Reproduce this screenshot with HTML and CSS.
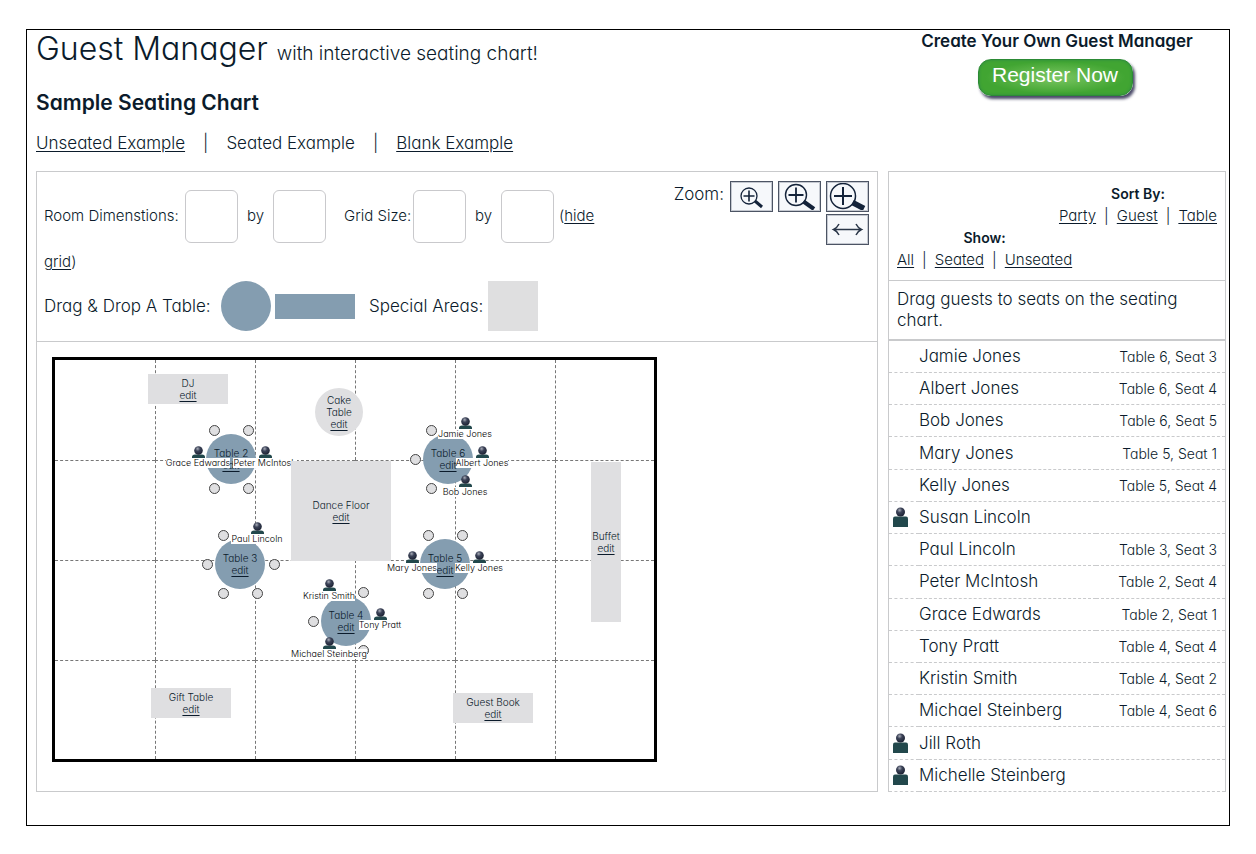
FILE: index.html
```html
<!DOCTYPE html>
<html lang="en">
<head>
  <meta charset="utf-8">
  <meta name="viewport" content="width=device-width, initial-scale=1">
  <title>Guest Manager</title>
  <link rel="stylesheet" href="styles.css">
</head>

<body>

<!-- shared icons -->
<svg class="sprite" width="0" height="0" aria-hidden="true">
  <defs>
    <radialGradient id="head" cx="0.4" cy="0.3" r="0.7">
      <stop offset="0" stop-color="#a9adb8"/>
      <stop offset="0.4" stop-color="#3b4257"/>
      <stop offset="1" stop-color="#1c2233"/>
    </radialGradient>
  </defs>
  <symbol id="person" viewBox="0 0 15 20">
    <path d="M0 20V11.500Q0 9.500 2 9.500H13Q15 9.500 15 11.500V20Z" fill="#22484c"/>
    <circle cx="7.500" cy="5" r="4.500" fill="url(#head)"/>
  </symbol>
  <symbol id="bust" viewBox="0 0 13 12">
    <path d="M0 12V11Q0 8.500 3 8.500H10Q13 8.500 13 11V12Z" fill="#22484c"/>
    <circle cx="6.500" cy="4.500" r="4.300" fill="url(#head)"/>
  </symbol>
</svg>

<div class="page">

  <header class="header">
    <div>
      <h1>Guest Manager <small>with interactive seating chart!</small></h1>
      <h2>Sample Seating Chart</h2>
      <nav class="examples">
        <a href="#unseated">Unseated Example</a>
        <span>|</span>
        <span>Seated Example</span>
        <span>|</span>
        <a href="#blank">Blank Example</a>
      </nav>
    </div>
    <div class="signup">
      <strong>Create Your Own Guest Manager</strong>
      <button type="button" class="register">Register Now</button>
    </div>
  </header>

  <div class="columns">

    <main class="chart">
      <div class="toolbar">
        <div class="tools">
          <form class="dims">
            <label class="room" for="room-w">Room Dimenstions:</label><input type="text" id="room-w"><label class="by" for="room-h">by</label><input type="text" id="room-h"><label class="grid-size" for="grid-w">Grid Size:</label><input type="text" id="grid-w"><label class="by" for="grid-h">by</label><input type="text" id="grid-h"><span class="hide">(<a href="#grid">hide grid</a>)</span>
          </form>
          <div class="palette">
            <span class="drop">Drag &amp; Drop A Table:</span>
            <div class="drag-round"></div>
            <div class="drag-long"></div>
            <span class="areas">Special Areas:</span>
            <div class="drag-area"></div>
          </div>
        </div>
        <div class="zoom">
          <span>Zoom:</span>
          <div class="zoom-buttons">
            <button type="button" aria-label="Zoom small">
              <svg width="41" height="29" viewBox="0 0 41 29" fill="none" stroke="#14233a">
                <circle cx="18" cy="14" r="8" stroke-width="1.300"/>
                <path d="M12.500 14H23.500M18 8.500V19.500" stroke-width="1.600"/>
                <path d="M24 19L31 25" stroke-width="3"/>
              </svg>
            </button>
            <button type="button" aria-label="Zoom medium">
              <svg width="41" height="29" viewBox="0 0 41 29" fill="none" stroke="#14233a">
                <circle cx="17" cy="13" r="10.500" stroke-width="1.400"/>
                <path d="M9.500 13H24.500M17 5.500V20.500" stroke-width="1.800"/>
                <path d="M24.500 19.500L35 27" stroke-width="4"/>
              </svg>
            </button>
            <button type="button" aria-label="Zoom large">
              <svg width="41" height="29" viewBox="0 0 41 29" fill="none" stroke="#14233a">
                <circle cx="16" cy="14" r="12.500" stroke-width="1.500"/>
                <path d="M7 14H25M16 5V23" stroke-width="2"/>
                <path d="M25.500 20.500L37 26.500" stroke-width="5.500"/>
              </svg>
            </button>
            <button type="button" class="fit" aria-label="Fit width">
              <svg width="41" height="29" viewBox="0 0 41 29" fill="none" stroke="#2a3648" stroke-width="1.500">
                <path d="M7 14.500H34M12 9Q10 13 6.500 14.500Q10 16 12 20M29 9Q31 13 34.500 14.500Q31 16 29 20"/>
              </svg>
            </button>
          </div>
        </div>
      </div>

      <div class="floor">
        <div class="room-plan" id="plan">
          <div class="cells" id="cells"></div>
        </div>
      </div>
    </main>

    <aside class="guests">
      <div class="filters">
        <div class="sort">
          <strong>Sort By:</strong>
          <div class="links"><a href="#party">Party</a><span>|</span><a href="#guest">Guest</a><span>|</span><a href="#table">Table</a></div>
        </div>
        <div class="show">
          <strong>Show:</strong>
          <div class="links"><a href="#all">All</a><span>|</span><a href="#seated">Seated</a><span>|</span><a href="#not-seated">Unseated</a></div>
        </div>
      </div>
      <p class="hint">Drag guests to seats on the seating chart.</p>
      <table>
        <tbody id="guest-list"></tbody>
      </table>
    </aside>

  </div>
</div>

<script src="chart.js"></script>
</body>
</html>
```
FILE: styles.css
```css
* {
  box-sizing: border-box;
}

body {
  margin: 0;
  background: #fff;
  color: #0b1b2b;
  font-family: Inter, "Open Sans", sans-serif;
  font-feature-settings: "cv11";
  font-weight: 300;
  font-size: 17px;
  line-height: 21px;
}

a {
  color: inherit;
  text-underline-offset: 2px;
}

strong {
  font-weight: 600;
}

.sprite {
  position: absolute;
}

.page {
  margin: 29px 26px 28px;
  padding: 0 3px 33px 9px;
  border: 1px solid #000;
}

/* header */
.header {
  display: flex;
  justify-content: space-between;
  min-height: 141px;
}

h1 {
  margin: 0;
  font-size: 32px;
  line-height: 37px;
  font-weight: 300;
}

h1 small {
  font-size: 19px;
}

h2 {
  margin: 18px 0 0;
  font-size: 21px;
  line-height: 26px;
  font-weight: 600;
}

.examples {
  display: flex;
  gap: 18px;
  margin-top: 17px;
}

.signup {
  display: flex;
  flex-direction: column;
  align-items: center;
  width: 338px;
  padding-top: 1px;
}

.register {
  width: 155px;
  height: 37px;
  margin: 7px 4px 0 0;
  padding: 0 0 6px;
  border: 1px solid #2c8a35;
  border-radius: 13px;
  background: radial-gradient(ellipse at center, #7cc663 0%, #41a532 65%);
  box-shadow: 2px 3px 3px #4a4a68, inset 0 0 3px #2c8a45;
  color: #fff;
  font-family: "Liberation Sans", Arial, sans-serif;
  font-size: 21px;
}

/* columns */
.columns {
  display: flex;
  gap: 10px;
}

.chart {
  flex: 1;
  border: 1px solid #c9cacc;
}

.guests {
  width: 338px;
  border: 1px solid #c9cacc;
  border-bottom: 0;
}

/* toolbar */
.toolbar {
  display: flex;
  justify-content: space-between;
  height: 170px;
  padding: 9px 8px 0 7px;
  border-bottom: 1px solid #c9cacc;
}

.tools {
  width: 580px;
}

.dims {
  padding-top: 9px;
  font-size: 15px;
  line-height: 38px;
}

.dims label {
  display: inline-block;
}

.dims input {
  width: 53px;
  height: 53px;
  border: 1px solid #c9c9cc;
  border-radius: 6px;
  vertical-align: middle;
}

.dims .room {
  width: 141px;
}

.dims .by {
  width: 35px;
  text-align: center;
}

.dims .grid-size {
  width: 87px;
  padding-left: 18px;
}

.hide {
  margin-left: 5px;
}

.palette {
  display: flex;
  align-items: center;
  gap: 4px;
}

.drop {
  width: 173px;
}

.areas {
  width: 115px;
  margin-left: 10px;
}

.drag-round {
  width: 50px;
  height: 50px;
  border-radius: 50%;
  background: #849db0;
}

.drag-long {
  width: 80px;
  height: 25px;
  background: #849db0;
}

.drag-area {
  width: 50px;
  height: 50px;
  background: #dfdfe0;
}

.zoom {
  display: flex;
  gap: 6px;
}

.zoom > span {
  padding-top: 3px;
}

.zoom-buttons {
  display: grid;
  grid-template-columns: repeat(3, 43px);
  grid-auto-rows: 31px;
  gap: 2px 5px;
}

.zoom-buttons button {
  padding: 0;
  border: 1px solid #4c5464;
  outline: 1px solid #c4c8d0;
  outline-offset: -2px;
  background: #f6f8fb;
}

.zoom-buttons svg {
  display: block;
}

.fit {
  grid-column: 3;
}

/* floor plan: items sit at their own spot in the room */
.floor {
  padding: 15px 15px 28px;
}

.room-plan {
  position: relative;
  width: 605px;
  height: 405px;
  border: 3px solid #000;
  font-size: 10px;
  line-height: 12px;
}

.cells {
  display: grid;
  grid-template-columns: repeat(5, 100px) 99px;
  grid-template-rows: repeat(3, 100px) 99px;
}

.cells div {
  border-left: 1px dashed #777;
  border-top: 1px dashed #777;
}

.cells div:nth-child(6n + 1) {
  border-left: 0;
}

.cells div:nth-child(-n + 6) {
  border-top: 0;
}

.item {
  position: absolute;
  display: flex;
  flex-direction: column;
  align-items: center;
  justify-content: center;
  background: #dfdfe1;
  text-align: center;
}

.item.round {
  border-radius: 50%;
}

.item.seating {
  background: #849db0;
}

.seat {
  position: absolute;
  width: 11px;
  height: 11px;
  border: 1px solid #444;
  border-radius: 50%;
  background: #dfdfe1;
}

.guest {
  position: absolute;
  display: flex;
  flex-direction: column;
  align-items: center;
  width: 80px;
  font-size: 9px;
  line-height: 10px;
}

.guest span {
  background: #fff;
  color: #000;
  white-space: nowrap;
}

/* guest list */
.filters {
  display: flex;
  flex-direction: column;
  height: 109px;
  padding: 11px 8px;
  border-bottom: 1px solid #c9cacc;
  font-size: 15px;
  line-height: 22px;
  text-align: center;
}

.sort {
  align-self: flex-end;
}

.show {
  align-self: flex-start;
}

.links {
  display: flex;
  gap: 8px;
}

.filters strong {
  font-size: 14px;
}

.hint {
  margin: 0;
  padding: 8px;
  border-bottom: 2px solid #c9cacc;
}

table {
  width: 100%;
  height: 451px;
  border-collapse: collapse;
}

td {
  padding: 0;
  border-bottom: 1px dashed #c9cacc;
}

td:first-child {
  width: 30px;
  padding-left: 4px;
}

td:last-child {
  padding-right: 8px;
  font-size: 14px;
  text-align: right;
}

td svg {
  display: block;
}
```
FILE: chart.js
```js
const guests = [
  ['Jamie Jones', 6, 3],
  ['Albert Jones', 6, 4],
  ['Bob Jones', 6, 5],
  ['Mary Jones', 5, 1],
  ['Kelly Jones', 5, 4],
  ['Susan Lincoln'],
  ['Paul Lincoln', 3, 3],
  ['Peter McIntosh', 2, 4],
  ['Grace Edwards', 2, 1],
  ['Tony Pratt', 4, 4],
  ['Kristin Smith', 4, 2],
  ['Michael Steinberg', 4, 6],
  ['Jill Roth'],
  ['Michelle Steinberg']
];

// number, left, top
const tables = [
  [2, 151, 74],
  [3, 160, 179],
  [4, 266, 236],
  [5, 365, 179],
  [6, 368, 74]
];

// name, left, top, width, height, class
const areas = [
  ['DJ', 93, 14, 80, 30, ''],
  ['Cake<br>Table', 260, 28, 48, 48, 'round'],
  ['Dance Floor', 236, 101, 100, 100, ''],
  ['Buffet', 536, 102, 30, 160, ''],
  ['Gift Table', 96, 328, 80, 30, ''],
  ['Guest Book', 398, 333, 80, 30, '']
];

// seat centres around the middle of a table, seat 1 on the left, clockwise
const seats = [[-33, 0], [-17, -29], [17, -29], [34, 0], [17, 29], [-17, 29]];

const plan = document.getElementById('plan');
document.getElementById('cells').innerHTML = '<div></div>'.repeat(24);

function addItem(name, x, y, w, h, cls) {
  plan.insertAdjacentHTML('beforeend',
    `<div class="item ${cls}" style="left:${x}px;top:${y}px;width:${w}px;height:${h}px">
      <span>${name}</span><a href="#edit">edit</a>
    </div>`);
}

tables.forEach(([number, x, y]) => {
  addItem('Table&nbsp;' + number, x, y, 50, 50, 'round seating');

  let people = '';
  seats.forEach(([dx, dy], i) => {
    const cx = x + 25 + dx;
    const cy = y + 25 + dy;
    const guest = guests.find(g => g[1] === number && g[2] === i + 1);
    if (guest) {
      people += `<div class="guest" style="left:${cx - 40}px;top:${cy - 13}px">
        <svg width="13" height="12"><use href="#bust"/></svg><span>${guest[0]}</span>
      </div>`;
    } else {
      plan.insertAdjacentHTML('beforeend', `<div class="seat" style="left:${cx - 5}px;top:${cy - 5}px"></div>`);
    }
  });
  plan.insertAdjacentHTML('beforeend', people);
});

areas.forEach(area => addItem(...area));

document.getElementById('guest-list').innerHTML = guests.map(([name, table, seat]) => `
  <tr>
    <td>${table ? '' : '<svg width="15" height="20"><use href="#person"/></svg>'}</td>
    <td>${name}</td>
    <td>${table ? `Table ${table}, Seat ${seat}` : ''}</td>
  </tr>`).join('');
```
